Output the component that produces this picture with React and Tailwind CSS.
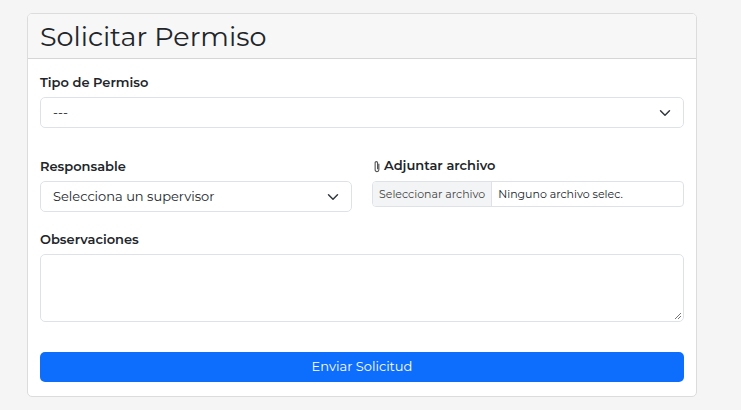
const Chevron = () => (
  <svg width="12" height="12" viewBox="0 0 16 16" fill="none" stroke="#343a40" strokeWidth="2" strokeLinecap="round" strokeLinejoin="round"><path d="m2 5 6 6 6-6"/></svg>
);

export default function App() {
  const f = { fontFamily: "Montserrat, Inter, 'Open Sans', sans-serif" };
  return (
    <div className="w-[741px] h-[410px] bg-[#f5f5f5] pt-[13px] pl-[27px]" style={f}>
      <div className="w-[670px] h-[384px] bg-white border border-[#dcdcdc] rounded-[5px] overflow-hidden text-[#212529]">
        <div className="h-[45px] bg-[#f7f7f7] border-b border-[#d6d6d6] flex items-center px-[12px]">
          <h1 className="text-[27px] leading-none">Solicitar Permiso</h1>
        </div>
        <div className="px-[12px] pt-[14px]">
          <div className="text-[13px] font-semibold h-[18px]">Tipo de Permiso</div>
          <div className="mt-[6px] h-[31px] border border-[#dee2e6] rounded-[5px] flex items-center justify-between px-[12px] text-[13px]">
            <span>---</span><Chevron />
          </div>
          <div className="mt-[29px] grid grid-cols-2 gap-[20px]">
            <div>
              <div className="text-[13px] font-semibold h-[18px]">Responsable</div>
              <div className="mt-[6px] h-[31px] border border-[#dee2e6] rounded-[5px] flex items-center justify-between px-[12px] text-[13px]">
                <span>Selecciona un supervisor</span><Chevron />
              </div>
            </div>
            <div>
              <div className="text-[13px] font-semibold h-[18px] flex items-center gap-[2px]">
                <svg width="10" height="13" viewBox="0 0 10 14" fill="none" stroke="#555" strokeWidth="1.2"><path d="M7 4v6.5a2 2 0 0 1-4 0V3a1.3 1.3 0 0 1 2.6 0v7"/></svg>
                Adjuntar archivo
              </div>
              <div className="mt-[6px] h-[26px] border border-[#dee2e6] rounded-[4px] flex text-[11px] overflow-hidden">
                <div className="bg-[#f3f4f6] border-r border-[#dee2e6] px-[6px] flex items-center text-[#444]">Seleccionar archivo</div>
                <div className="px-[6px] flex items-center">Ninguno archivo selec.</div>
              </div>
            </div>
          </div>
          <div className="mt-[18px] text-[13px] font-semibold h-[18px]">Observaciones</div>
          <div className="mt-[6px] h-[68px] border border-[#dee2e6] rounded-[5px] relative">
            <svg className="absolute right-[1px] bottom-[1px]" width="8" height="8" viewBox="0 0 8 8" stroke="#777"><path d="M7 1 1 7M7 4 4 7"/></svg>
          </div>
          <button className="mt-[30px] w-full h-[30px] bg-[#0d6efd] text-white rounded-[5px] text-[13px]">Enviar Solicitud</button>
        </div>
      </div>
    </div>
  );
}
